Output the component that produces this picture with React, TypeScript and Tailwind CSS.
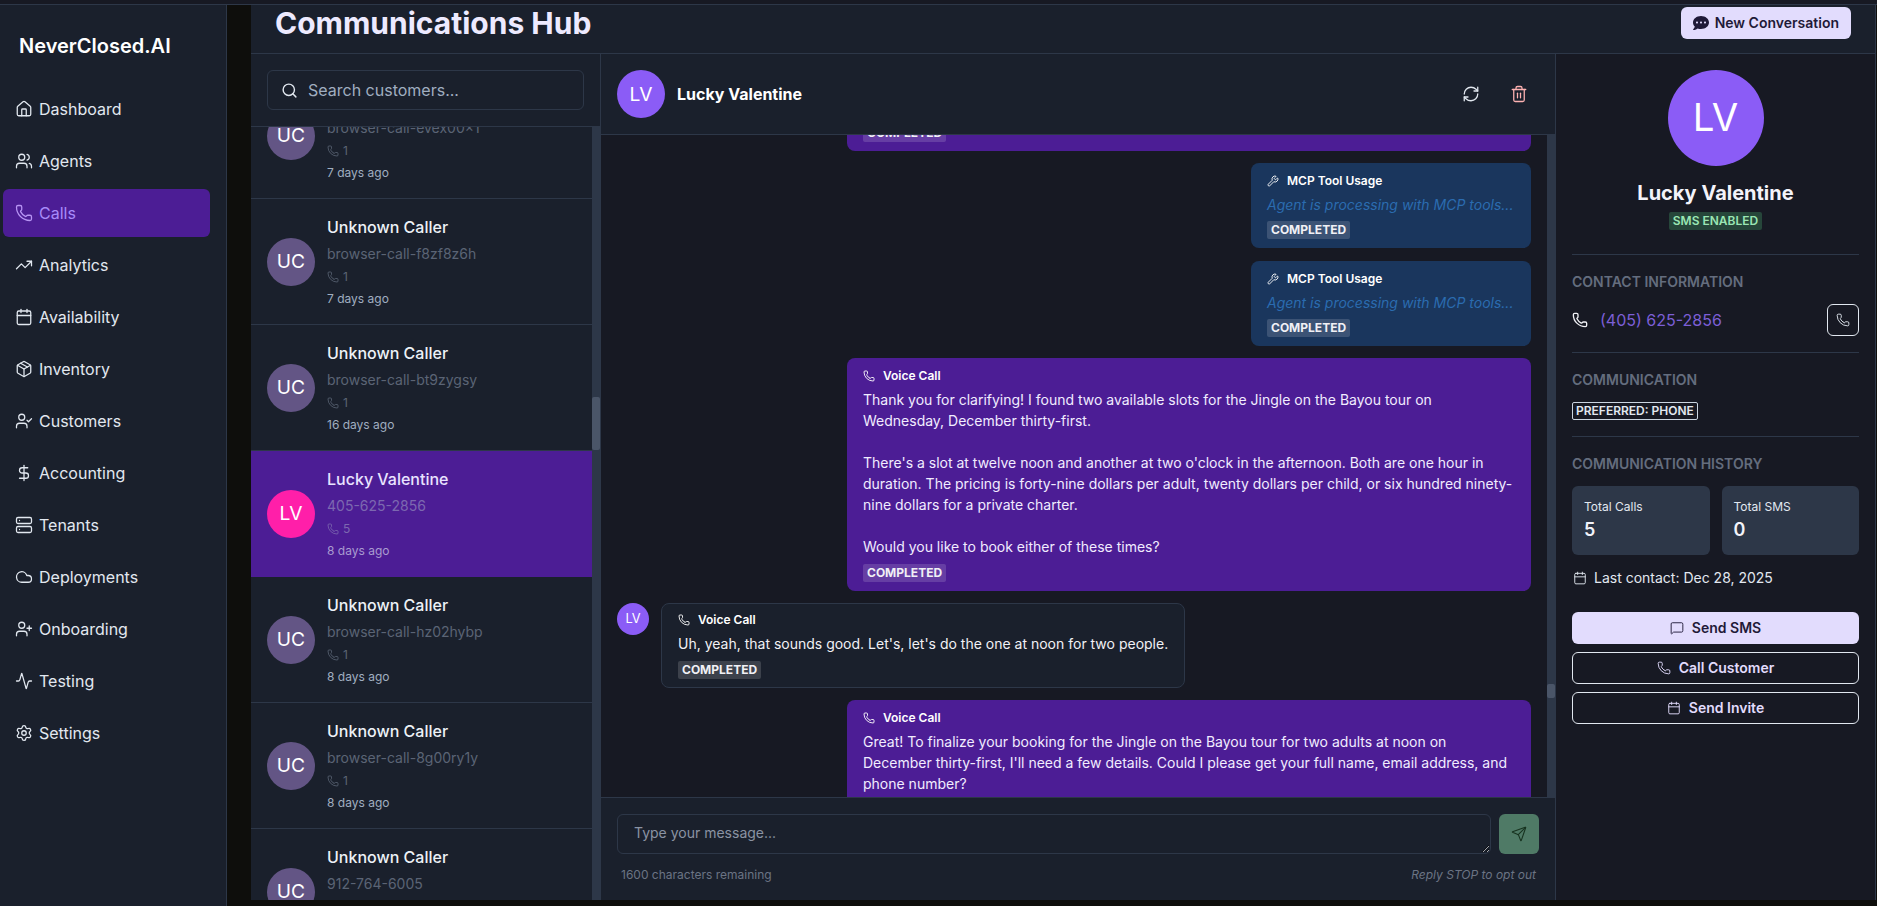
import {
  Activity,
  Calendar,
  Cloud,
  DollarSign,
  House,
  MessageSquare,
  Package,
  Phone,
  RefreshCw,
  Search,
  Send,
  Server,
  Settings,
  Trash2,
  TrendingUp,
  UserCheck,
  UserPlus,
  Users,
  Wrench,
} from 'lucide-react';
import { FaCommentDots } from 'react-icons/fa';

const navItems = [
  { label: 'Dashboard', icon: House },
  { label: 'Agents', icon: Users },
  { label: 'Calls', icon: Phone, active: true },
  { label: 'Analytics', icon: TrendingUp },
  { label: 'Availability', icon: Calendar },
  { label: 'Inventory', icon: Package },
  { label: 'Customers', icon: UserCheck },
  { label: 'Accounting', icon: DollarSign },
  { label: 'Tenants', icon: Server },
  { label: 'Deployments', icon: Cloud },
  { label: 'Onboarding', icon: UserPlus },
  { label: 'Testing', icon: Activity },
  { label: 'Settings', icon: Settings },
];

const customers = [
  { name: 'Unknown Caller', initials: 'UC', sub: 'browser-call-evex00x1', calls: 1, when: '7 days ago' },
  { name: 'Unknown Caller', initials: 'UC', sub: 'browser-call-f8zf8z6h', calls: 1, when: '7 days ago' },
  { name: 'Unknown Caller', initials: 'UC', sub: 'browser-call-bt9zygsy', calls: 1, when: '16 days ago' },
  { name: 'Lucky Valentine', initials: 'LV', sub: '405-625-2856', calls: 5, when: '8 days ago', selected: true },
  { name: 'Unknown Caller', initials: 'UC', sub: 'browser-call-hz02hybp', calls: 1, when: '8 days ago' },
  { name: 'Unknown Caller', initials: 'UC', sub: 'browser-call-8g00ry1y', calls: 1, when: '8 days ago' },
  { name: 'Unknown Caller', initials: 'UC', sub: '912-764-6005', calls: 1, when: '8 days ago' },
];

function Sidebar() {
  return (
    <aside className="w-[227px] shrink-0 bg-[#1a202c] border-r border-[#2d3748]">
      <div className="pl-[19px] pt-[26px] h-[80px] text-[20px] leading-[30px] font-semibold text-white">NeverClosed.AI</div>
      <nav className="flex flex-col gap-1 pl-[3px] w-[210px]">
        {navItems.map(({ label, icon: Icon, active }) => (
          <div
            key={label}
            className={`flex items-center gap-[6px] h-12 pl-3 rounded-md text-base ${active ? 'bg-[#4c1d95] text-[#a78bfa]' : 'text-[#e2e8f0]'}`}
          >
            <Icon size={18} strokeWidth={1.7} className={active ? 'text-[#b794f4]' : 'text-[#e2e8f0]'} />
            {label}
          </div>
        ))}
      </nav>
    </aside>
  );
}

function CustomerList() {
  return (
    <div className="w-[350px] shrink-0 flex flex-col bg-[#1a202c] border-r border-[#2d3748]">
      <div className="p-4 border-b border-[#2d3748]">
        <div className="flex items-center gap-[10px] h-10 pl-[13px] w-[317px] rounded-md border border-[#2d3748]">
          <Search size={17} className="text-[#e2e8f0]" />
          <input
            placeholder="Search customers..."
            className="flex-1 bg-transparent outline-none text-base text-white placeholder:text-[#a0aec0]"
          />
        </div>
      </div>
      <div className="flex-1 flex min-h-0">
        <div className="flex-1 overflow-hidden">
          <div className="-mt-[54px]">
            {customers.map((c, i) => (
              <div
                key={i}
                className={`flex items-center gap-3 pl-4 pt-4 pb-4 border-b ${c.selected ? 'bg-[#4c1d95] border-[#4c1d95]' : 'border-[#2d3748]'}`}
              >
                <div
                  className={`w-12 h-12 shrink-0 rounded-full flex items-center justify-center text-[19.2px] text-white ${c.selected ? 'bg-[#ff1fa9]' : 'bg-[#635585]'}`}
                >
                  {c.initials}
                </div>
                <div className="flex flex-col gap-1">
                  <div className={`text-base leading-6 font-medium ${c.selected ? 'text-[#e9e3ff]' : 'text-[#edf2f7]'}`}>{c.name}</div>
                  <div className={`text-sm leading-[21px] ${c.selected ? 'text-[#7c68b0]' : 'text-[#5b6475]'}`}>{c.sub}</div>
                  <div className={`flex items-center gap-1 text-xs leading-[18px] ${c.selected ? 'text-[#7c68b0]' : 'text-[#5b6475]'}`}>
                    <Phone size={12} strokeWidth={1.6} />
                    {c.calls}
                  </div>
                  <div className={`text-xs leading-[18px] ${c.selected ? 'text-[#a99bd0]' : 'text-[#a0aec0]'}`}>{c.when}</div>
                </div>
              </div>
            ))}
          </div>
        </div>
        <div className="w-2 shrink-0 bg-[#2d3748]">
          <div className="mt-[270px] h-[53px] bg-[#4a5568] rounded-xs" />
        </div>
      </div>
    </div>
  );
}

function Badge() {
  return (
    <div className="block w-fit mt-[6.5px] h-[18px] px-1 rounded-xs bg-white/15 text-xs leading-[18px] font-bold text-[#f0f0f5]">COMPLETED</div>
  );
}

function Label({ tool }: { tool?: boolean }) {
  const Icon = tool ? Wrench : Phone;
  return (
    <div className="flex items-center gap-2 mb-1 text-xs leading-[18px] font-semibold text-white">
      <Icon size={12} strokeWidth={1.8} />
      {tool ? 'MCP Tool Usage' : 'Voice Call'}
    </div>
  );
}

function AgentBubble({ text }: { text?: string }) {
  return (
    <div className="self-end w-[684px] shrink-0 rounded-lg bg-[#4c1d95] px-4 py-[9px] text-sm leading-[21px] text-[#f1ecff] whitespace-pre-wrap">
      <Label />
      {text}
      <Badge />
    </div>
  );
}

function ToolBubble() {
  return (
    <div className="self-end w-[280px] shrink-0 rounded-lg bg-[#1a365d] px-4 py-[9px]">
      <Label tool />
      <div className="text-sm leading-[21px] italic text-[#2b6cb0] whitespace-nowrap">Agent is processing with MCP tools...</div>
      <Badge />
    </div>
  );
}

function ChatPanel() {
  return (
    <div className="flex-1 min-w-0 flex flex-col bg-[#171923] border-r border-[#2d3748]">
      <div className="flex items-center gap-3 p-4 bg-[#1a202c] border-b border-[#2d3748]">
        <div className="w-12 h-12 rounded-full bg-[#8b5cf6] flex items-center justify-center text-[19.2px] text-white">LV</div>
        <div className="flex-1 text-base font-bold text-white">Lucky Valentine</div>
        <div className="flex items-center gap-[30px] pr-[11px]">
          <RefreshCw size={18} strokeWidth={1.7} className="text-[#e2e8f0]" />
          <Trash2 size={18} strokeWidth={1.7} className="text-[#feb2b2]" />
        </div>
      </div>
      <div className="flex-1 flex min-h-0">
        <div className="flex-1 overflow-hidden px-4">
          <div className="flex flex-col gap-[12.25px] -mt-[45px]">
            <AgentBubble />
            <ToolBubble />
            <ToolBubble />
            <AgentBubble
              text={
                "Thank you for clarifying! I found two available slots for the Jingle on the Bayou tour on Wednesday, December thirty-first.\n\nThere's a slot at twelve noon and another at two o'clock in the afternoon. Both are one hour in duration. The pricing is forty-nine dollars per adult, twenty dollars per child, or six hundred ninety-nine dollars for a private charter.\n\nWould you like to book either of these times?"
              }
            />
            <div className="flex gap-3 items-start">
              <div className="w-8 h-8 shrink-0 rounded-full bg-[#8b5cf6] flex items-center justify-center text-[12.8px] text-white">LV</div>
              <div className="rounded-lg border border-[#2d3748] bg-[#1a202c] px-4 pt-[7px] pb-[8px] text-sm leading-[21px] text-[#f1f1f5]">
                <Label />
                {"Uh, yeah, that sounds good. Let's, let's do the one at noon for two people."}
                <Badge />
              </div>
            </div>
            <AgentBubble
              text={
                "Great! To finalize your booking for the Jingle on the Bayou tour for two adults at noon on December thirty-first, I'll need a few details. Could I please get your full name, email address, and phone number?"
              }
            />
          </div>
        </div>
        <div className="w-2 shrink-0 bg-[#2d3748]">
          <div className="mt-[549px] h-[14px] bg-[#4a5568] rounded-xs" />
        </div>
      </div>
      <div className="h-[103px] shrink-0 bg-[#1a202c] border-t border-[#2d3748] px-4 pt-4">
        <div className="flex gap-2">
          <textarea
            placeholder="Type your message..."
            className="flex-1 h-10 px-4 py-[7px] rounded-md border border-[#2d3748] bg-transparent outline-none text-sm leading-[21px] text-white placeholder:text-[#8a93a3]"
          />
          <button className="w-10 h-10 rounded-md bg-[#4f7a66] flex items-center justify-center">
            <Send size={16} strokeWidth={1.6} className="text-[#17321f]" />
          </button>
        </div>
        <div className="flex justify-between mt-[12px] pl-1 pr-[3px] text-xs leading-[18px] text-[#6b7484]">
          <span>1600 characters remaining</span>
          <span className="italic">Reply STOP to opt out</span>
        </div>
      </div>
    </div>
  );
}

function SectionTitle({ children }: { children: string }) {
  return <div className="text-sm leading-[21px] font-semibold text-[#646d7e]">{children}</div>;
}

function CustomerPanel() {
  return (
    <div className="w-[319px] shrink-0 bg-[#171923] p-4 flex flex-col">
      <div className="flex flex-col items-center">
        <div className="w-24 h-24 rounded-full bg-[#8b5cf6] flex items-center justify-center text-[38.4px] text-white">LV</div>
        <div className="mt-3 text-xl leading-[30px] font-bold text-[#f3f3fa]">Lucky Valentine</div>
        <div className="mt-1 h-[18px] px-1 rounded-xs bg-[#26463a] text-xs leading-[18px] font-semibold text-[#9ae6b4]">SMS ENABLED</div>
      </div>
      <div className="mt-6 mb-4 border-t border-[#2d3748]" />
      <SectionTitle>CONTACT INFORMATION</SectionTitle>
      <div className="mt-3 flex items-center">
        <Phone size={16} className="text-[#f1f1f5]" />
        <span className="ml-3 flex-1 text-base text-[#7c5fd6]">(405) 625-2856</span>
        <div className="w-8 h-8 rounded-md border border-[#e2e8f0] flex items-center justify-center">
          <Phone size={14} strokeWidth={1.6} className="text-[#e2e8f0]" />
        </div>
      </div>
      <div className="mt-4 mb-4 border-t border-[#2d3748]" />
      <SectionTitle>COMMUNICATION</SectionTitle>
      <div className="mt-3 self-start h-[18px] px-[3px] border border-[#cbd5e0] rounded-xs text-xs leading-[16px] font-semibold text-[#e2e8f0]">PREFERRED: PHONE</div>
      <div className="mt-4 mb-4 border-t border-[#2d3748]" />
      <SectionTitle>COMMUNICATION HISTORY</SectionTitle>
      <div className="mt-3 grid grid-cols-2 gap-3">
        <div className="bg-[#2d3748] rounded-md p-3">
          <div className="text-xs leading-[18px] text-[#e2e8f0]">Total Calls</div>
          <div className="text-lg leading-[27px] font-semibold text-[#f3f3fa]">5</div>
        </div>
        <div className="bg-[#2d3748] rounded-md p-3">
          <div className="text-xs leading-[18px] text-[#e2e8f0]">Total SMS</div>
          <div className="text-lg leading-[27px] font-semibold text-[#f3f3fa]">0</div>
        </div>
      </div>
      <div className="mt-3 flex items-center gap-[7px] text-sm leading-[21px] text-[#e2e8f0]">
        <Calendar size={14} strokeWidth={1.6} className="ml-[1px]" />
        Last contact: Dec 28, 2025
      </div>
      <div className="mt-6 flex flex-col gap-2 text-sm font-semibold">
        <button className="h-8 rounded-md bg-[#e2dcfd] text-[#1f1a38] flex items-center justify-center gap-2">
          <MessageSquare size={14} strokeWidth={1.6} />
          Send SMS
        </button>
        <button className="h-8 rounded-md border border-[#e2e8f0] text-[#e2dcfd] flex items-center justify-center gap-2">
          <Phone size={14} strokeWidth={1.6} />
          Call Customer
        </button>
        <button className="h-8 rounded-md border border-[#e2e8f0] text-[#e2dcfd] flex items-center justify-center gap-2">
          <Calendar size={14} strokeWidth={1.6} />
          Send Invite
        </button>
      </div>
    </div>
  );
}

export default function App() {
  return (
    <div className="h-screen flex flex-col overflow-hidden bg-[#0e0e0c] font-[Inter,sans-serif]">
      <div className="h-[5px] shrink-0 bg-[#171923] border-b border-[#2d3748]" />
      <div className="flex-1 flex min-h-0">
        <Sidebar />
        <div className="w-6 shrink-0" />
        <main className="flex-1 min-w-0 flex flex-col mb-[6px] mr-[1px] border-r border-[#2d3748]">
          <div className="h-[49px] shrink-0 flex items-center justify-between bg-[#1a202c] border-b border-[#2d3748] pl-6 pr-6">
            <h1 className="text-[30px] leading-[36px] font-bold text-[#edeaff] -mt-[12px]">Communications Hub</h1>
            <button className="h-8 px-3 -mt-[12px] rounded-md bg-[#e2dcfd] text-[#1f1a38] flex items-center gap-[6px] text-sm font-semibold">
              <FaCommentDots size={16} />
              New Conversation
            </button>
          </div>
          <div className="flex-1 flex min-h-0">
            <CustomerList />
            <ChatPanel />
            <CustomerPanel />
          </div>
        </main>
      </div>
    </div>
  );
}
